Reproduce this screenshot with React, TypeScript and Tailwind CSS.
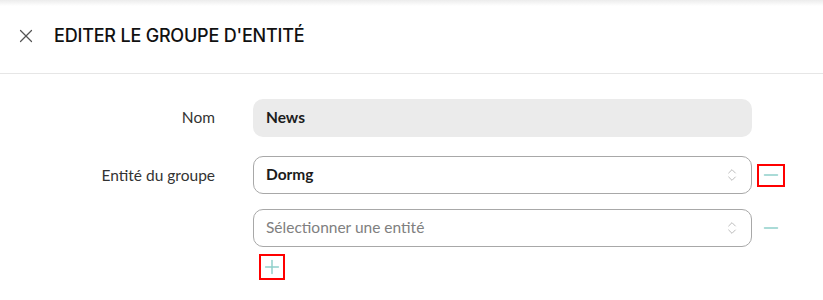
import { X, Minus, Plus, ChevronsUpDown } from "lucide-react";

function SelectBox({ value, placeholder }: { value?: string; placeholder: string }) {
    return (
        <div className="flex items-center justify-between w-[499px] h-[38px] rounded-[10px] border border-[#a8a8a8] bg-white pl-[12px] pr-[11px]">
            {value ? (
                <span className="text-[15.5px] font-bold text-[#1c1c1c]">{value}</span>
            ) : (
                <span className="text-[15.5px] text-[#808080]">{placeholder}</span>
            )}
            <ChevronsUpDown size={16} strokeWidth={1.3} className="text-[#b0b0b0]" />
        </div>
    );
}

export default function App() {
    return (
        <div className="w-[823px] h-[300px] bg-white overflow-hidden font-['Lato',sans-serif]">
            {/* Top shadow */}
            <div className="h-[6px] bg-gradient-to-b from-[#ececec] to-white" />

            {/* Header */}
            <div className="flex items-center h-[68px] border-b border-[#e6e6e6] pl-[15px] pb-[8px]">
                <X size={22} strokeWidth={1.3} className="text-[#555]" />
                <h1 className="ml-[17px] text-[18px] font-medium text-[#111] font-['Inter',sans-serif] tracking-[-0.2px]">
                    EDITER LE GROUPE D'ENTITÉ
                </h1>
            </div>

            {/* Form */}
            <div className="flex flex-col pt-[25px]">
                <div className="flex items-center">
                    <label className="w-[215px] text-right text-[15.5px] text-[#333]">Nom</label>
                    <div className="ml-[38px] flex items-center w-[499px] h-[38px] rounded-[10px] bg-[#ebebeb] pl-[13px]">
                        <span className="text-[15.5px] font-bold text-[#1c1c1c]">News</span>
                    </div>
                </div>

                <div className="flex items-start mt-[19px]">
                    <label className="w-[215px] text-right text-[15.5px] text-[#333] pt-[8px]">Entité du groupe</label>
                    <div className="ml-[38px] flex flex-col">
                        <div className="flex items-center">
                            <SelectBox value="Dormg" placeholder="Sélectionner une entité" />
                            <div className="ml-[5px] w-[28px] h-[23px] border-2 border-[#ff0000] flex items-center justify-center">
                                <Minus size={22} strokeWidth={1.8} className="text-[#8ecfca]" />
                            </div>
                        </div>
                        <div className="flex items-center mt-[15px]">
                            <SelectBox placeholder="Sélectionner une entité" />
                            <div className="ml-[5px] w-[28px] h-[23px] flex items-center justify-center">
                                <Minus size={22} strokeWidth={1.8} className="text-[#8ecfca]" />
                            </div>
                        </div>
                        <div className="mt-[7px] ml-[6px] w-[26px] h-[26px] border-2 border-[#ff0000] flex items-center justify-center">
                            <Plus size={22} strokeWidth={1.6} className="text-[#8ecfca]" />
                        </div>
                    </div>
                </div>
            </div>
        </div>
    );
}
